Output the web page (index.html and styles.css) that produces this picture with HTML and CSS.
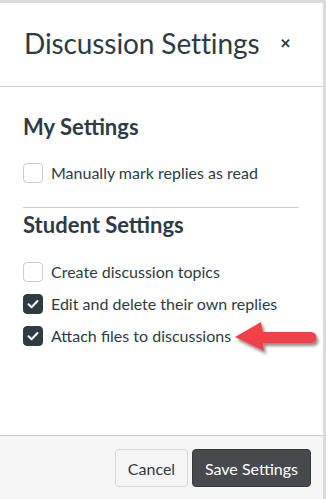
FILE: index.html
```html
<!DOCTYPE html>
<html>
<head>
<meta charset="utf-8">
<link rel="stylesheet" href="styles.css">
</head>
<body>
<div class="modal">
  <div class="modal-header">
    <h1 class="title">Discussion Settings</h1>
    <span class="close">&#x2715;</span>
  </div>
  <div class="modal-body">
    <h2 class="section-title">My Settings</h2>
    <label class="row"><span class="box"></span><span>Manually mark replies as read</span></label>
    <hr class="divider">
    <h2 class="section-title second">Student Settings</h2>
    <div class="list">
      <label class="row"><span class="box"></span><span>Create discussion topics</span></label>
      <label class="row"><span class="box checked"><svg viewBox="0 0 20 20" width="20" height="20"><path d="M5.5 10.2 L8.6 13.2 L14.5 7" fill="none" stroke="#fff" stroke-width="2" stroke-linecap="round" stroke-linejoin="round"/></svg></span><span>Edit and delete their own replies</span></label>
      <label class="row"><span class="box checked"><svg viewBox="0 0 20 20" width="20" height="20"><path d="M5.5 10.2 L8.6 13.2 L14.5 7" fill="none" stroke="#fff" stroke-width="2" stroke-linecap="round" stroke-linejoin="round"/></svg></span><span>Attach files to discussions</span></label>
    </div>
    <svg class="arrow" viewBox="0 0 96 40" width="96" height="40">
      <defs>
        <filter id="sh" x="-20%" y="-30%" width="140%" height="170%">
          <feGaussianBlur in="SourceAlpha" stdDeviation="1.6"/>
          <feOffset dx="1.5" dy="2.5" result="b"/>
          <feComponentTransfer><feFuncA type="linear" slope="0.45"/></feComponentTransfer>
          <feMerge><feMergeNode/><feMergeNode in="SourceGraphic"/></feMerge>
        </filter>
      </defs>
      <g filter="url(#sh)">
        <path d="M4 17 L30 2 L32 12 L80 12 A5.5 5.5 0 0 1 80 23 L32 23 L33 31 Z" fill="#f23f47"/>
      </g>
    </svg>
  </div>
  <div class="modal-footer">
    <button class="btn cancel">Cancel</button>
    <button class="btn save">Save Settings</button>
  </div>
</div>
</body>
</html>
```
FILE: styles.css
```css
html, body {
  margin: 0;
  padding: 0;
}
body {
  width: 326px;
  height: 499px;
  background: #dcdcdc;
  font-family: Lato, "Open Sans", sans-serif;
  color: #2d3b45;
  overflow: hidden;
}
.modal {
  width: 323px;
  height: 496px;
  margin-top: 3px;
  background: #fff;
  display: flex;
  flex-direction: column;
  position: relative;
}
.modal-header {
  height: 84px;
  border-bottom: 1px solid #c7cdd1;
  display: flex;
  align-items: center;
  padding: 0 0 0 24px;
  box-sizing: border-box;
  flex: none;
}
.title {
  margin: 0;
  font-size: 28px;
  font-weight: 400;
  line-height: 1;
  letter-spacing: -0.1px;
  padding-bottom: 4px;
}
.close {
  margin-left: 21px;
  font-size: 13px;
  font-weight: 700;
  padding-bottom: 4px;
}
.modal-body {
  flex: 1;
  padding: 26px 24px 0 23px;
  position: relative;
}
.section-title {
  margin: 0;
  font-size: 22px;
  font-weight: 700;
  line-height: 28px;
}
.row {
  display: flex;
  align-items: center;
  gap: 8px;
  font-size: 16px;
  height: 20px;
  line-height: 20px;
}
.modal-body > .row {
  margin-top: 22px;
}
.box {
  width: 20px;
  height: 20px;
  box-sizing: border-box;
  border: 1px solid #c7cdd1;
  border-radius: 4px;
  background: #fff;
  flex: none;
  display: flex;
}
.box.checked {
  background: #2d3b45;
  border-color: #2d3b45;
}
.box svg {
  margin: -1px;
}
.divider {
  border: 0;
  border-top: 1px solid #c7cdd1;
  margin: 24px 0 0;
}
.section-title.second {
  margin-top: 3px;
}
.list {
  margin-top: 23px;
  display: flex;
  flex-direction: column;
  gap: 12px;
}
.arrow {
  position: absolute;
  left: 231px;
  top: 233px;
}
.modal-footer {
  flex: none;
  height: 64px;
  border-top: 1px solid #c7cdd1;
  background: #f5f5f5;
  box-sizing: border-box;
  display: flex;
  justify-content: flex-end;
  align-items: flex-start;
  padding: 13px 12px 0 0;
  gap: 4px;
}
.btn {
  font-family: Lato, "Open Sans", sans-serif;
  font-size: 16px;
  height: 38px;
  border-radius: 4px;
  padding: 0 10px;
  cursor: pointer;
}
.cancel {
  background: #f5f5f5;
  border: 1px solid #d7dadd;
  color: #2d3b45;
  width: 73px;
}
.save {
  background: #464a4f;
  border: 1px solid #36393d;
  color: #fff;
  width: 119px;
}
```
